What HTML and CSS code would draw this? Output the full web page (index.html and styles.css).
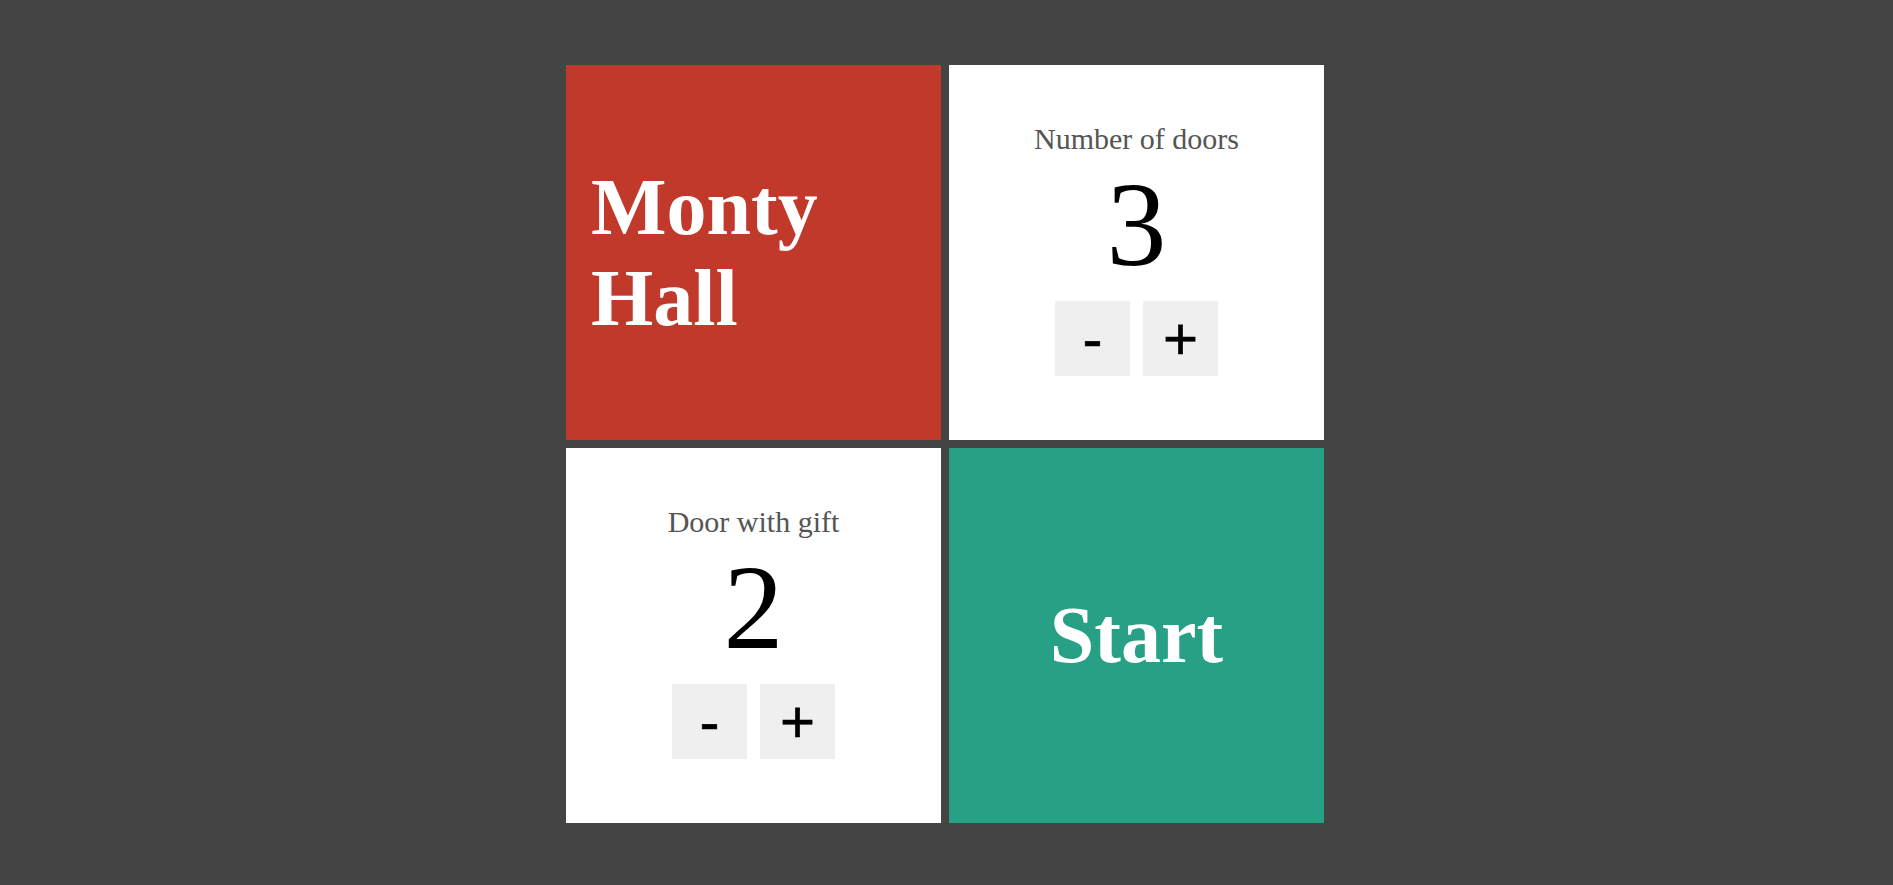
FILE: index.html
```html
<!DOCTYPE html>
<html>
<head>
<meta charset="utf-8">
<link rel="stylesheet" href="styles.css">
</head>
<body>
<main class="board">
  <section class="tile tile-title">
    <h1 class="title">Monty Hall</h1>
  </section>
  <section class="tile tile-counter">
    <div class="label">Number of doors</div>
    <div class="value">3</div>
    <div class="controls">
      <button class="btn">-</button>
      <button class="btn">+</button>
    </div>
  </section>
  <section class="tile tile-counter">
    <div class="label">Door with gift</div>
    <div class="value">2</div>
    <div class="controls">
      <button class="btn">-</button>
      <button class="btn">+</button>
    </div>
  </section>
  <section class="tile tile-start">
    <div class="start">Start</div>
  </section>
</main>
</body>
</html>
```

FILE: styles.css
```css
html, body {
  margin: 0;
  padding: 0;
  height: 100%;
}

body {
  background: #444444;
  font-family: "Liberation Serif", "Times New Roman", serif;
}

.board {
  display: grid;
  grid-template-columns: 375px 375px;
  grid-template-rows: 375px 375px;
  gap: 8px;
  justify-content: center;
  padding: 65px 3px 0 0;
}

.tile {
  display: flex;
  flex-direction: column;
  justify-content: center;
}

.tile-title {
  background: #c0392b;
  padding-left: 25px;
}

.title {
  margin: 0;
  color: #ffffff;
  font-size: 80px;
  font-weight: bold;
  line-height: normal;
}

.tile-counter {
  background: #ffffff;
  align-items: center;
}

.label {
  color: #555555;
  font-size: 30px;
}

.value {
  color: #000000;
  font-size: 120px;
}

.controls {
  display: flex;
  gap: 13px;
  margin: 7px 0;
}

.btn {
  width: 75px;
  height: 75px;
  padding: 0;
  border: none;
  background: #efefef;
  color: #000000;
  font-family: "Liberation Sans", Arial, sans-serif;
  font-size: 60px;
  line-height: 1;
  -webkit-text-stroke: 0.6px #000000;
}

.tile-start {
  background: #28a086;
  align-items: center;
}

.start {
  color: #ffffff;
  font-size: 80px;
  font-weight: bold;
}
```
